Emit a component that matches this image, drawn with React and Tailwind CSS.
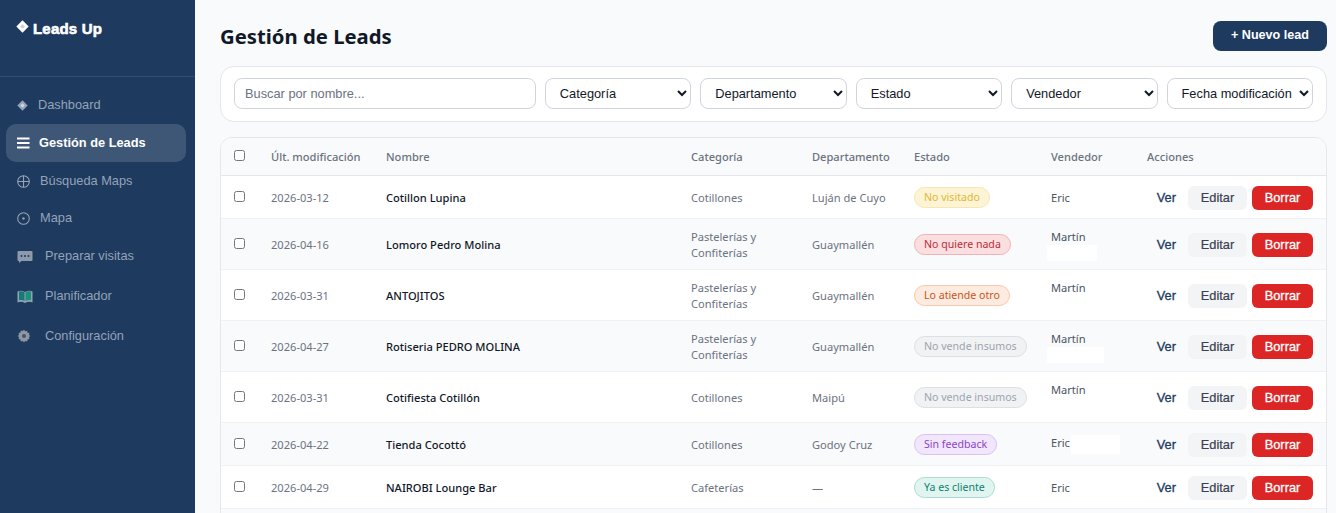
const navItems = [
  { label: 'Dashboard', icon: 'diamond', iconW: 'w-[21px]', cls: 'h-[38px]' },
  { label: 'Gestión de Leads', icon: 'menu', iconW: 'w-[22px]', active: true, cls: 'h-[38px]' },
  { label: 'Búsqueda Maps', icon: 'plus', iconW: 'w-[23px]', cls: 'h-[38px]' },
  { label: 'Mapa', icon: 'dot', iconW: 'w-[23px]', cls: 'h-[36px]' },
  { label: 'Preparar visitas', icon: 'chat', iconW: 'w-[28px]', cls: 'h-[40px]' },
  { label: 'Planificador', icon: 'map', iconW: 'w-[28px]', cls: 'h-[39px]' },
  { label: 'Configuración', icon: 'gear', iconW: 'w-[28px]', cls: 'h-[41px]' },
];

const leads = [
  { date: '2026-03-12', name: 'Cotillon Lupina', cat: ['Cotillones'], dep: 'Luján de Cuyo', state: 'yellow', seller: 'Eric' },
  { date: '2026-04-16', name: 'Lomoro Pedro Molina', cat: ['Pastelerías y', 'Confiterías'], dep: 'Guaymallén', state: 'red', seller: 'Martín', patch: 'w-[50px]' },
  { date: '2026-03-31', name: 'ANTOJITOS', cat: ['Pastelerías y', 'Confiterías'], dep: 'Guaymallén', state: 'orange', seller: 'Martín', patch: 'w-[50px]' },
  { date: '2026-04-27', name: 'Rotiseria PEDRO MOLINA', cat: ['Pastelerías y', 'Confiterías'], dep: 'Guaymallén', state: 'gray', seller: 'Martín', patch: 'w-[57px]' },
  { date: '2026-03-31', name: 'Cotifiesta Cotillón', cat: ['Cotillones'], dep: 'Maipú', state: 'gray', seller: 'Martín', patch: 'w-[50px]' },
  { date: '2026-04-22', name: 'Tienda Cocottó', cat: ['Cotillones'], dep: 'Godoy Cruz', state: 'purple', seller: 'Eric', inlinePatch: true },
  { date: '2026-04-29', name: 'NAIROBI Lounge Bar', cat: ['Cafeterías'], dep: '—', state: 'teal', seller: 'Eric' },
  { date: '', name: '', cat: [''], dep: '', state: null, seller: '' },
];

const states = {
  yellow: { label: 'No visitado', cls: 'bg-[#fdf4d5] text-[#e2b634] border-[#f8e6ae]' },
  red: { label: 'No quiere nada', cls: 'bg-[#fbdfe0] text-[#c02a38] border-[#f0b2b4]' },
  orange: { label: 'Lo atiende otro', cls: 'bg-[#fdebdf] text-[#c8541c] border-[#f8c9a8]' },
  gray: { label: 'No vende insumos', cls: 'bg-[#f1f2f4] text-[#9ca3af] border-[#dcdfe4]' },
  purple: { label: 'Sin feedback', cls: 'bg-[#f1e6fb] text-[#8b45c9] border-[#dcc0f3]' },
  teal: { label: 'Ya es cliente', cls: 'bg-[#e0f5f0] text-[#0f8070] border-[#a8dcd0]' },
};

const filters = ['Categoría', 'Departamento', 'Estado', 'Vendedor', 'Fecha modificación'];
const columns = ['Últ. modificación', 'Nombre', 'Categoría', 'Departamento', 'Estado', 'Vendedor', 'Acciones'];

function NavIcon({ type }) {
  if (type === 'menu') {
    return (
      <svg width="13" height="12" viewBox="0 0 13 12" className="text-white">
        <path d="M0 1.500h12.500M0 6h12.500M0 10.500h12.500" stroke="currentColor" strokeWidth="2" />
      </svg>
    );
  }
  if (type === 'diamond') {
    return (
      <svg width="11" height="11" viewBox="0 0 11 11">
        <path d="M5.500.3l5.200 5.200-5.200 5.200L.3 5.500z" fill="#94a3b8" />
        <path d="M5.500 3.300l2.200 2.200-2.200 2.200-2.200-2.200z" fill="#cbd5e1" />
      </svg>
    );
  }
  if (type === 'plus') {
    return (
      <svg width="13" height="13" viewBox="0 0 13 13" fill="none" stroke="#94a3b8" strokeWidth="1.100">
        <circle cx="6.500" cy="6.500" r="5.800" />
        <path d="M.7 6.500h11.600M6.500.7v11.600" />
      </svg>
    );
  }
  if (type === 'dot') {
    return (
      <svg width="13" height="13" viewBox="0 0 13 13" fill="none" stroke="#94a3b8" strokeWidth="1.100">
        <circle cx="6.500" cy="6.500" r="5.800" />
        <circle cx="6.500" cy="6.500" r="1.200" fill="#94a3b8" stroke="none" />
      </svg>
    );
  }
  if (type === 'chat') {
    return (
      <svg width="16" height="13" viewBox="0 0 16 13">
        <path d="M1.500 1h13a1 1 0 011 1v8a1 1 0 01-1 1H4.500L2 13v-2h-.500a1 1 0 01-1-1V2a1 1 0 011-1z" fill="#8d9aab" />
        <circle cx="4.500" cy="6" r="1" fill="#1e3a5f" />
        <circle cx="8" cy="6" r="1" fill="#1e3a5f" />
        <circle cx="11.500" cy="6" r="1" fill="#1e3a5f" />
      </svg>
    );
  }
  if (type === 'map') {
    return (
      <svg width="16" height="14" viewBox="0 0 16 14">
        <path d="M.5 2.500c2-1 5-1 7.500.5 2.500-1.500 5.500-1.500 7.500-.5v11c-2-1-5-1-7.500.5-2.500-1.500-5.500-1.500-7.500-.5z" fill="#8fa5b5" />
        <path d="M2 2.500c2-.6 4-.4 5.500.8v8.700c-1.500-1-3.500-1.200-5.500-.8z" fill="#177a78" />
        <path d="M8.500 3.300c1.500-1.200 3.500-1.400 5.500-.8v8.700c-2-.4-4-.2-5.500.8z" fill="#1f8f7e" />
      </svg>
    );
  }
  return (
    <svg width="14" height="14" viewBox="0 0 14 14">
      <path d="M7 .5l1.100 1.800 2-.6.4 2 2 .4-.6 2L13.500 7l-1.600 1.100.6 2-2 .4-.4 2-2-.6L7 13.500l-1.100-1.600-2 .6-.4-2-2-.4.6-2L.5 7l1.600-1.100-.6-2 2-.4.4-2 2 .6z" fill="#8d96a3" />
      <circle cx="7" cy="7" r="2" fill="#4b5563" />
    </svg>
  );
}

function Sidebar() {
  return (
    <aside className="w-[195px] shrink-0 bg-[#1e3a5f] font-['Liberation_Sans',sans-serif]">
      <div className="flex h-[77px] items-start gap-[4px] border-b border-white/10 pl-[16px] pt-[19px] text-white">
        <svg width="13" height="13" viewBox="0 0 13 13" className="mt-[1px]">
          <path d="M6.500.3l6.200 6.200-6.200 6.200L.3 6.500z" fill="#fff" />
          <path d="M6.500 4l2.500 2.500-2.500 2.500L4 6.500z" fill="#cbd5e1" />
        </svg>
        <span className="text-[15px] font-bold leading-[20px] tracking-[.2px] [-webkit-text-stroke:0.6px_white]">Leads Up</span>
      </div>
      <nav className="flex flex-col pl-[6px] pr-[9px] pt-[9px]">
        {navItems.map((item) => (
          <div
            key={item.label}
            className={`flex items-center pl-[11px] text-[12.800px] ${item.cls} ${
              item.active ? 'rounded-[10px] bg-white/15 font-bold text-white' : 'text-[#94a3b8]'
            }`}
          >
            <span className={`flex shrink-0 items-center ${item.iconW}`}>
              <NavIcon type={item.icon} />
            </span>
            <span>{item.label}</span>
          </div>
        ))}
      </nav>
    </aside>
  );
}

function Filters() {
  return (
    <div className="mt-[15px] flex items-center gap-[9px] rounded-[14px] border border-[#e5e7eb] bg-white px-[13px] pb-[12px] pt-[11px] font-['Liberation_Sans',sans-serif]">
      <input
        placeholder="Buscar por nombre..."
        className="h-[31px] w-[302px] rounded-[8px] border border-[#d1d5db] bg-white px-[10px] text-[12.800px] text-[#111827] outline-none placeholder:text-[#6b7280]"
      />
      {filters.map((f) => (
        <select
          key={f}
          defaultValue={f}
          className="h-[31px] w-[146.500px] rounded-[8px] border border-[#d1d5db] bg-white pl-[10px] text-[12.800px] text-[#111827]"
        >
          <option>{f}</option>
        </select>
      ))}
    </div>
  );
}

function Row({ lead, i }) {
  const state = states[lead.state];
  return (
    <tr className={`border-b border-[#f0f1f3] ${i % 2 ? 'bg-[#f9fafb]' : 'bg-white'}`}>
      <td className="pl-[13px] align-middle">
        {state && <input type="checkbox" className="mb-[1px] block h-[11px] w-[11px]" />}
      </td>
      <td className="px-[13px] pb-[8px] pt-[10px] text-[#6b7280]">{lead.date}</td>
      <td className="px-[13px] pb-[8px] pt-[10px] font-[550] text-[#111827]">{lead.name}</td>
      <td className="px-[13px] pb-[8px] pt-[10px] text-[#6b7280]">
        {lead.cat.map((c) => (
          <div key={c}>{c}</div>
        ))}
      </td>
      <td className="px-[13px] pb-[8px] pt-[10px] text-[#6b7280]">{lead.dep}</td>
      <td className="px-[13px] pb-[8px] pt-[10px]">
        {state && (
          <span className={`inline-block h-[21px] rounded-full border px-[9px] text-[10.600px] leading-[19px] ${state.cls}`}>
            {state.label}
          </span>
        )}
      </td>
      <td className="px-[13px] pb-[8px] pt-[10px] text-[#4b5563]">
        <div className="flex">
          {lead.seller}
          {lead.inlinePatch && <span className="ml-[1px] h-[19px] w-[49px] bg-white" />}
        </div>
        {lead.patch && <div className={`-ml-[4px] h-[16px] bg-white ${lead.patch}`} />}
      </td>
      <td className="pb-[8px] pr-[13px] pt-[10px]">
        {state && (
          <div className="flex items-center justify-end gap-[5px] font-['Liberation_Sans',sans-serif] text-[12.800px]">
            <button className="h-[24px] pl-[9px] pr-[7px] text-[#1e3a5f] [-webkit-text-stroke:0.3px_#1e3a5f]">Ver</button>
            <button className="h-[24px] w-[59px] rounded-[6px] bg-[#f3f4f6] text-[#374151] [-webkit-text-stroke:0.2px_#374151]">Editar</button>
            <button className="h-[24px] w-[61px] rounded-[6px] bg-[#dc2626] text-white [-webkit-text-stroke:0.3px_white]">Borrar</button>
          </div>
        )}
      </td>
    </tr>
  );
}

export default function App() {
  return (
    <div className="flex h-[513px] overflow-hidden bg-[#f8fafc]">
      <Sidebar />
      <main className="min-w-0 flex-1 pl-[25px] pr-[9px] pt-[20px]">
        <div className="flex items-center justify-between">
          <h1 className="pt-[1px] font-['Noto_Sans',sans-serif] text-[20.300px] font-bold leading-[30px] text-[#111827]">Gestión de Leads</h1>
          <button className="h-[30px] w-[114px] rounded-[8px] bg-[#1e3a5f] font-['Liberation_Sans',sans-serif] text-[12.600px] font-bold text-white">
            + Nuevo lead
          </button>
        </div>
        <Filters />
        <div className="mt-[15px] overflow-hidden rounded-[12px] border border-[#e5e7eb] bg-white font-['Noto_Sans',sans-serif] text-[11.100px] leading-[16px] whitespace-nowrap">
          <table className="w-full table-fixed border-collapse">
            <colgroup>
              <col className="w-[37px]" />
              <col className="w-[115px]" />
              <col className="w-[305px]" />
              <col className="w-[121px]" />
              <col className="w-[102px]" />
              <col className="w-[137px]" />
              <col className="w-[96px]" />
              <col />
            </colgroup>
            <thead>
              <tr className="h-[37px] border-b border-[#e5e7eb] bg-[#f9fafb]">
                <th className="pl-[13px]">
                  <input type="checkbox" className="mb-[1px] block h-[11px] w-[11px]" />
                </th>
                {columns.map((c) => (
                  <th key={c} className="px-[13px] pt-[2px] text-left font-medium text-[#6b7280]">
                    {c}
                  </th>
                ))}
              </tr>
            </thead>
            <tbody>
              {leads.map((lead, i) => (
                <Row key={i} lead={lead} i={i} />
              ))}
            </tbody>
          </table>
        </div>
      </main>
    </div>
  );
}
